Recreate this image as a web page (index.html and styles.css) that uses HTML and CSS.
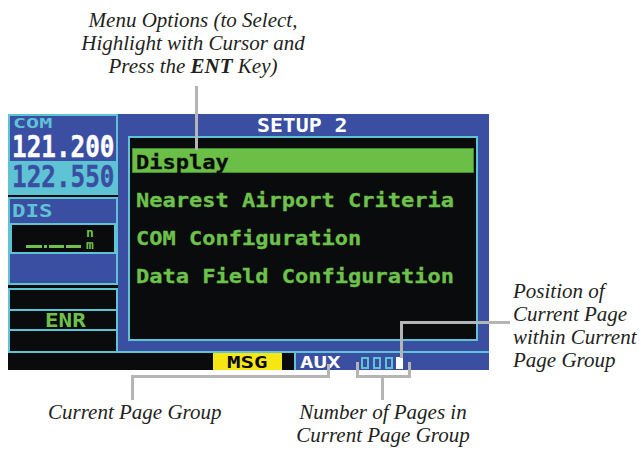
FILE: index.html
```html
<!DOCTYPE html>
<html>
<head>
<meta charset="utf-8">
<link rel="stylesheet" href="styles.css">
</head>
<body>
<div class="figure">
  <div class="device">
    <div class="top">
      <div class="side">
        <div class="com">
          <div class="com-label"><span>COM</span></div>
          <div class="freq freq-active"><span>121.200</span></div>
          <div class="freq freq-standby"><span>122.550</span></div>
        </div>
        <div class="sep"></div>
        <div class="dis">
          <div class="dis-label"><span>DIS</span></div>
          <div class="dis-box">
            <div class="dashes"><i class="d1"></i><i class="d2"></i><i class="d3"></i><i class="d4"></i></div>
            <div class="units"><span>n</span><span>m</span></div>
          </div>
          <div class="dis-empty"></div>
        </div>
        <div class="sep sep-3"></div>
        <div class="modes">
          <div class="mode mode-1"></div>
          <div class="mode mode-2"><span>ENR</span></div>
          <div class="mode mode-3"></div>
        </div>
      </div>
      <div class="main">
        <div class="title"><span>SETUP 2</span></div>
        <div class="screen">
          <div class="item sel"><span>Display</span></div>
          <div class="item"><span>Nearest Airport Criteria</span></div>
          <div class="item"><span>COM Configuration</span></div>
          <div class="item"><span>Data Field Configuration</span></div>
        </div>
      </div>
    </div>
    <div class="status">
      <div class="st-black"></div>
      <div class="st-msg"><span>MSG</span></div>
      <div class="st-gap"></div>
      <div class="st-group">
        <span class="aux">AUX</span>
        <span class="pages">
          <i class="pg"></i><i class="pg"></i><i class="pg"></i><i class="pg cur"></i>
        </span>
      </div>
    </div>
  </div>

  <div class="line l-top"></div>
  <div class="line l-pos-v"></div>
  <div class="line l-pos-h"></div>
  <div class="line l-num-l"></div>
  <div class="line l-num-r"></div>
  <div class="line l-num-h"></div>
  <div class="line l-num-m"></div>
  <div class="line l-grp-v"></div>
  <div class="line l-grp-h"></div>
  <div class="line l-grp-d"></div>

  <div class="cap cap-top">Menu Options (to Select,<br>Highlight with Cursor and<br>Press the <b>ENT</b> Key)</div>
  <div class="cap cap-right">Position of<br>Current Page<br>within Current<br>Page Group</div>
  <div class="cap cap-group">Current Page Group</div>
  <div class="cap cap-num">Number of Pages in<br>Current Page Group</div>
</div>
</body>
</html>
```

FILE: styles.css
```css
* { box-sizing: border-box; margin: 0; padding: 0; }
body { margin: 0; background: #fff; width: 641px; height: 450px; overflow: hidden; }

.figure { position: relative; width: 641px; height: 450px; padding: 114px 0 0 8px; }

.device {
  width: 481px; height: 256px;
  display: flex; flex-direction: column;
  font-family: "DejaVu Sans Mono", monospace; font-weight: bold;
}
.top { display: flex; height: 239px; }

/* left column */
.side { width: 110px; display: flex; flex-direction: column; }
.com {
  height: 81px; background: #3a4ea2; border: 2px solid #5ec3d5;
  display: flex; flex-direction: column;
}
.com-label { color: #5ec3d5; font-size: 14px; line-height: 14px; padding-left: 3px; }
.com-label span, .dis-label span, .st-msg span, .aux, .mode-2 span, .title span, .item span {
  display: inline-block; transform-origin: left center;
}
.com-label span { transform: scaleX(1.55); }
.freq { font-size: 30px; padding-left: 2px; white-space: nowrap; }
.freq span { display: inline-block; transform: scaleX(0.81); transform-origin: left center; -webkit-text-stroke: 0.4px currentColor; }
.freq-active { color: #fff; line-height: 24px; margin-top: 5px; }
.freq-standby { color: #3a4ea2; background: #5ec3d5; line-height: 32px; margin-top: 2px; flex: 1; }

.sep { height: 2px; background: #0a0b0d; }
.sep-3 { height: 3px; }

.dis {
  height: 88px; background: #3a4ea2; border: 2px solid #5ec3d5;
  display: flex; flex-direction: column;
}
.dis-label { color: #5ec3d5; font-size: 18px; line-height: 24px; height: 24px; padding-left: 2px; }
.dis-label span { transform: scaleX(1.25); }
.dis-box {
  height: 31px; background: #0a0b0d; border: 2px solid #5ec3d5;
  display: flex; align-items: flex-end; padding: 0 0 1px 14px;
}
.dashes { display: flex; align-items: center; height: 6px; margin-bottom: 2px; }
.dashes i { display: block; height: 3px; background: #6dc24b; margin-right: 2px; }
.dashes .d1 { width: 16px; }
.dashes .d2 { width: 3px; }
.dashes .d3 { width: 15px; }
.dashes .d4 { width: 15px; }
.units {
  display: flex; flex-direction: column; color: #6dc24b;
  font-size: 13px; line-height: 12px; margin-left: 3px;
}

.dis-empty { flex: 1; }

.modes {
  height: 65px; background: #0a0b0d; border: 2px solid #5ec3d5;
  display: flex; flex-direction: column;
}
.mode-1 { height: 19px; }
.mode-2 {
  height: 22px; border-top: 2px solid #5ec3d5; border-bottom: 2px solid #5ec3d5;
  color: #6dc24b; font-size: 20px; line-height: 18px; padding-left: 35px;
}
.mode-2 span { transform: scaleX(1.13); }
.mode-3 { flex: 1; }

/* main screen */
.main {
  flex: 1; background: #3a4ea2; border-bottom: 2px solid #5ec3d5;
  display: flex; flex-direction: column;
}
.title {
  height: 22px; line-height: 22px; color: #fff;
  font-size: 19px; padding-left: 139px; white-space: nowrap;
}
.title span { transform: scaleX(1.13); }
.screen {
  height: 205px; margin: 0 11px 0 10px;
  border: 2px solid #5ec3d5; background: #0a0b0d;
  padding: 10px 2px 0;
  display: flex; flex-direction: column; gap: 13px;
}
.item {
  height: 25px; padding: 3px 0 0 4px; line-height: 22px;
  font-size: 20px; color: #6dc24b; white-space: nowrap;
}
.item span { transform: scaleX(1.1); -webkit-text-stroke: 0.3px currentColor; }
.item.sel { background: #6bbf47; color: #0a0b0d; box-shadow: inset 0 0 0 1px #3f8f2c; }

/* status bar */
.status { display: flex; height: 17px; background: #0a0b0d; font-size: 16px; line-height: 15px; }
.st-black { width: 205px; }
.st-msg { width: 69px; background: #f5e614; color: #0a0b0d; padding: 2px 0 0 14px; }
.st-msg span { transform: scaleX(1.4); }
.st-gap { width: 12px; }
.st-group {
  flex: 1; background: #3a4ea2; border-left: 2px solid #5ec3d5;
  display: flex; align-items: flex-start; padding: 2px 0 0 4px;
}
.aux { color: #fff; transform: scaleX(1.4); width: 61px; }
.pages { display: flex; gap: 4px; margin-top: 2px; }
.pg { display: block; width: 8px; height: 12px; border: 2px solid #5ec3d5; }
.pg.cur { width: 7px; background: #fff; border-color: #fff; margin-left: -1px; }

/* callout lines */
.line { position: absolute; background: #b5b5b5; }
.l-top { left: 195px; top: 86px; width: 3px; height: 64px; }
.l-pos-v { left: 400px; top: 321px; width: 3px; height: 37px; }
.l-pos-h { left: 400px; top: 321px; width: 110px; height: 3px; }
.l-num-l { left: 356px; top: 362px; width: 3px; height: 16px; }
.l-num-r { left: 408px; top: 362px; width: 3px; height: 16px; }
.l-num-h { left: 356px; top: 375px; width: 55px; height: 3px; }
.l-num-m { left: 381px; top: 375px; width: 3px; height: 25px; }
.l-grp-v { left: 327px; top: 364px; width: 3px; height: 14px; }
.l-grp-h { left: 131px; top: 375px; width: 199px; height: 3px; }
.l-grp-d { left: 131px; top: 375px; width: 3px; height: 25px; }

/* captions */
.cap {
  position: absolute; font-family: "Liberation Serif", serif; font-style: italic;
  font-size: 21px; line-height: 23px; color: #231f20; white-space: nowrap;
}
.cap b { font-weight: bold; }
.cap-top { left: 63px; top: 9px; width: 260px; text-align: center; }
.cap-right { left: 513px; top: 280px; }
.cap-group { left: 48px; top: 401px; }
.cap-num { left: 283px; top: 401px; width: 200px; text-align: center; }
```
